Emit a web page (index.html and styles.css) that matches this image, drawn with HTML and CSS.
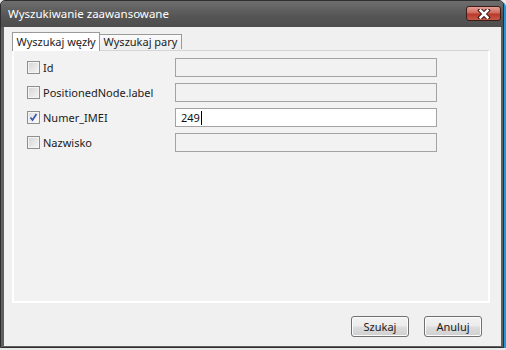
FILE: index.html
```html
<!DOCTYPE html>
<html lang="pl">
<head>
    <meta charset="UTF-8">
    <title>Wyszukiwanie zaawansowane</title>
    <link rel="stylesheet" href="styles.css">
</head>
<body>
    <div class="window">
        <div class="titlebar">
            <span class="title">Wyszukiwanie zaawansowane</span>
            <div class="close">
                <svg width="14" height="10" viewBox="0 0 14 10">
                    <path d="M3.5 1.5 L10.5 8.5 M10.5 1.5 L3.5 8.5" stroke="#3a1410" stroke-width="4.5" stroke-linecap="square"/>
                    <path d="M3.5 1.5 L10.5 8.5 M10.5 1.5 L3.5 8.5" stroke="#fff" stroke-width="2.5" stroke-linecap="square"/>
                </svg>
            </div>
        </div>

        <div class="client">
            <div class="tabs">
                <div class="tab active">Wyszukaj węzły</div>
                <div class="tab">Wyszukaj pary</div>
            </div>

            <div class="panel">
                <div class="row">
                    <span class="check"></span>
                    <span class="label">Id</span>
                    <span class="field"></span>
                </div>
                <div class="row">
                    <span class="check"></span>
                    <span class="label">PositionedNode.label</span>
                    <span class="field"></span>
                </div>
                <div class="row">
                    <span class="check checked">
                        <svg width="11" height="11" viewBox="0 0 11 11">
                            <path d="M2.5 5.5 L4.5 8 L8.5 2" fill="none" stroke="#3b55b5" stroke-width="1.7"/>
                        </svg>
                    </span>
                    <span class="label">Numer_IMEI</span>
                    <span class="field active">249<span class="caret"></span></span>
                </div>
                <div class="row">
                    <span class="check"></span>
                    <span class="label">Nazwisko</span>
                    <span class="field"></span>
                </div>
            </div>

            <div class="buttons">
                <div class="btn">Szukaj</div>
                <div class="btn">Anuluj</div>
            </div>
        </div>
    </div>
</body>
</html>
```

FILE: styles.css
```css
body {
    margin: 0;
    background-color: #e9e9e9;
    font-family: "Noto Sans", "Liberation Sans", Arial, sans-serif;
    font-size: 11px;
    color: #1b1b1b;
}
.window {
    box-sizing: border-box;
    width: 504px;
    height: 348px;
    border: 1px solid #2e2e2e;
    border-radius: 5px 5px 0 0;
    background-color: #606060;
    box-shadow: 2px 2px 0 #1e9ad6;
    display: flex;
    flex-direction: column;
}
.titlebar {
    height: 26px;
    display: flex;
    align-items: flex-start;
    justify-content: space-between;
    background: linear-gradient(#6e6e6e, #555555 60%, #4d4d4d);
    border-radius: 4px 4px 0 0;
}
.title {
    color: #fff;
    font-size: 11.5px;
    line-height: 26px;
    padding-left: 7px;
}
.close {
    box-sizing: border-box;
    width: 35px;
    height: 15px;
    margin: 5px 2px 0 0;
    border: 1px solid #3c1c18;
    border-radius: 3px;
    background: linear-gradient(#e4a196, #d06a5c 45%, #b9392a 55%, #c65a47);
    display: flex;
    align-items: center;
    justify-content: center;
}
.client {
    flex: 1;
    margin: 0 2px 1px 3px;
    padding: 5px 11px 0 8px;
    background-color: #f0f0f0;
}
.tabs {
    height: 18px;
    display: flex;
    align-items: flex-end;
    position: relative;
    z-index: 1;
}
.tab {
    box-sizing: border-box;
    height: 15px;
    width: 82px;
    border: 1px solid #9a9a9a;
    border-bottom: none;
    border-left: none;
    background: linear-gradient(#fbfbfb, #ececec);
    text-align: center;
    line-height: 14px;
    margin-bottom: 1px;
}
.tab.active {
    width: 88px;
    height: 19px;
    line-height: 17px;
    border-left: 1px solid #9a9a9a;
    background: #fff;
    margin-bottom: -1px;
}
.panel {
    box-sizing: border-box;
    height: 253px;
    border: 2px solid #fff;
    border-top: 1px solid #d4d4d4;
    background-color: #f2f2f2;
    padding: 7px 0 0 13px;
}
.row {
    height: 19px;
    margin-bottom: 6px;
    display: flex;
    align-items: center;
}
.check {
    box-sizing: border-box;
    width: 13px;
    height: 13px;
    border: 1px solid #8e8f8f;
    background: linear-gradient(135deg, #d4d4d4, #f6f6f6);
    box-shadow: inset 0 0 0 1px #f4f4f4;
    display: flex;
    align-items: center;
    justify-content: center;
}
.check.checked {
    background: linear-gradient(135deg, #dcdcdc, #ffffff);
}
.label {
    width: 132px;
    padding-left: 3px;
}
.field {
    box-sizing: border-box;
    width: 262px;
    height: 19px;
    border: 1px solid #a3a3a3;
    background-color: #f2f2f2;
    padding-left: 5px;
    display: flex;
    align-items: center;
}
.field.active {
    background-color: #fff;
    color: #111;
}
.caret {
    width: 1px;
    height: 14px;
    background-color: #000;
    margin-left: 1px;
}
.buttons {
    display: flex;
    justify-content: flex-end;
    gap: 15px;
    margin-top: 13px;
    padding-right: 8px;
}
.btn {
    box-sizing: border-box;
    width: 58px;
    height: 21px;
    border: 1px solid #707070;
    border-radius: 3px;
    background: linear-gradient(#f3f3f3, #ebebeb 48%, #dddddd 52%, #cfcfcf);
    box-shadow: inset 0 0 0 1px #fcfcfc;
    text-align: center;
    line-height: 19px;
}
```
